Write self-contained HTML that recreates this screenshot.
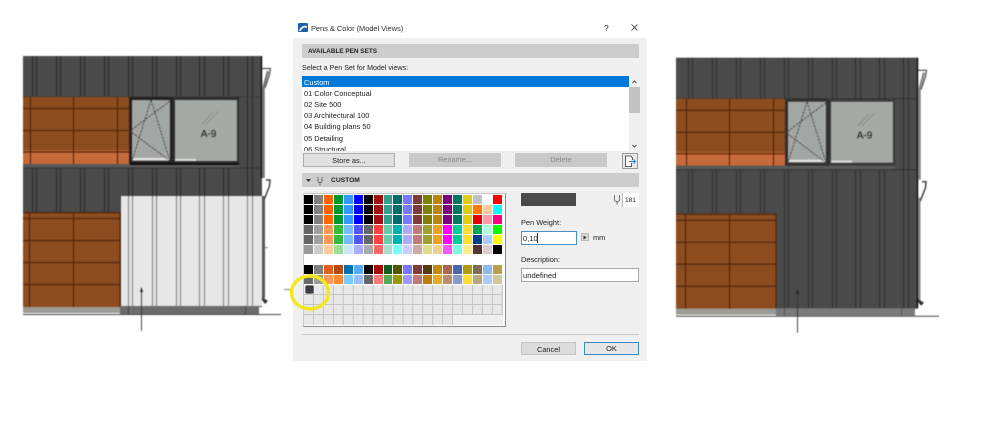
<!DOCTYPE html>
<html><head><meta charset="utf-8"><title>Pens &amp; Color</title>
<style>
html,body{margin:0;padding:0;background:#fff;width:998px;height:429px;overflow:hidden}
body{position:relative;font-family:"Liberation Sans",sans-serif;color:#222}
svg.d{position:absolute;left:0;top:0;filter:blur(.4px)}
.a{position:absolute}
.t{position:absolute;white-space:nowrap;font-size:7.4px;line-height:11px;color:#222}
.bar{position:absolute;left:302px;width:337px;height:14px;background:#cdcdcd;border-radius:1px}
.btn{position:absolute;height:13px;line-height:13px;text-align:center;font-size:7.4px;box-sizing:border-box}
.pal{position:absolute;left:304px;top:195px;width:199px;display:grid;grid-template-columns:repeat(20,8.95px);grid-auto-rows:9px;gap:1px}
.pal i{display:block}
</style></head><body>
<svg class="d" width="998" height="429" viewBox="0 0 998 429">
<!-- LEFT BUILDING -->
<rect x="23" y="56" width="239" height="112" fill="#4a4a4a"/>
<rect x="23" y="168" width="239" height="44" fill="#4a4a4a"/>
<rect x="120" y="196" width="142" height="111" fill="#4a4a4a"/>
<path transform="translate(.5 0)" d="M32 56V97M36 56V97M56 56V97M60 56V97M80 56V97M84 56V97M104 56V97M108 56V97M128 56V97M132 56V97M152 56V97M156 56V97M176 56V97M180 56V97M199 56V97M204 56V97M223 56V97M228 56V97M247 56V168M252 56V168M32 168V212M36 168V212M56 168V212M60 168V212M80 168V212M84 168V212M104 168V212M108 168V212M128 168V196M132 168V196M152 168V196M156 168V196M176 168V196M180 168V196M199 168V196M204 168V196M223 168V196M228 168V196M247 168V196M252 168V196" stroke="#2a2a2a" stroke-width="1" fill="none"/>
<path d="M23 97H262" stroke="#333" stroke-width=".8"/>
<rect x="23" y="97" width="106" height="54" fill="#8c4c1e"/>
<rect x="23" y="150" width="106" height="2" fill="#b0602e"/>
<rect x="23" y="152" width="106" height="12" fill="#c76a3a"/>
<path d="M23 108.500H129M23 130.500H129M23 152H129M30.500 97V164M73.500 97V164M117.500 97V164" stroke="#4a1e06" stroke-width="1" fill="none"/>
<rect x="129" y="97" width="44" height="68" fill="#222"/>
<rect x="132" y="100" width="38" height="61" fill="#a2a6a4"/>
<rect x="133" y="158" width="36" height="2" fill="#e8e8e8"/>
<path d="M151 100L132 161M151 100L170 161M170 101L130 131L170 161" stroke="#3c3c3c" stroke-width=".8" stroke-dasharray="2.500 1" fill="none"/>
<rect x="173" y="97" width="66" height="68" fill="#303030"/>
<rect x="175" y="100" width="62" height="61" fill="#a5a9a6"/>
<rect x="175" y="159" width="21" height="2" fill="#e4e4e4"/>
<path d="M202 124L213 112M206 124L219 111" stroke="#888" stroke-width=".8"/>
<text x="208.500" y="137" font-family="Liberation Sans,sans-serif" font-size="10" text-anchor="middle" fill="#111">A-9</text>
<rect x="23" y="164" width="216" height="4" fill="#5a5a5a"/>
<rect x="130" y="163" width="109" height="2" fill="#111"/>
<path d="M23 168H262" stroke="#2c2c2c" stroke-width=".8"/>
<path d="M261.500 56V178" stroke="#111" stroke-width="1.500"/>
<path d="M262 68.500H270.500L269.500 75L265 88" stroke="#333" stroke-width="1" fill="none"/>
<path d="M268 71L263.500 88V178" stroke="#777" stroke-width="2.500" fill="none"/>
<path d="M266 180H270L269.500 186L264 200" stroke="#444" stroke-width="1.500" fill="none"/>
<!-- lower left -->
<rect x="23" y="212" width="97" height="95" fill="#8c4c1e"/>
<path d="M23 212.500H120M23 218.500H120M23 240.500H120M23 262.500H120M23 284.500H120M29.500 212V307M73.500 212V307M120 212V307" stroke="#4a1e06" stroke-width="1" fill="none"/>
<rect x="121" y="196" width="141" height="110" fill="#e7e7e7"/>
<path transform="translate(.5 0)" d="M128 196V306M132 196V306M152 196V306M156 196V306M176 196V306M180 196V306M199 196V306M204 196V306M223 196V306M228 196V306M247 196V306M252 196V306" stroke="#858585" stroke-width="1.100" fill="none"/>
<rect x="23" y="307" width="97" height="6" fill="#9c9c96"/>
<rect x="120" y="306" width="139" height="8" fill="#6c6c6c"/>
<path d="M128.500 306V314M245.500 306V314" stroke="#444" stroke-width="1"/>
<path d="M23 314.500H281" stroke="#444" stroke-width="1"/>
<path d="M263.500 196V298" stroke="#5a5a5a" stroke-width="3" fill="none"/>
<path d="M262 297L268 301L265 304L262 300Z" fill="#333"/>
<path d="M141.500 291V331" stroke="#333" stroke-width=".9"/>
<path d="M141.500 287L143 292H140Z" fill="#222"/>
<path d="M262 247.500H268M284 289.500H291" stroke="#555" stroke-width=".8"/>

<!-- RIGHT BUILDING -->
<g transform="translate(656,1.700)">
<rect x="20" y="56" width="242" height="251" fill="#4a4a4a"/>
<path transform="translate(.5 0)" d="M32 56V97M36 56V97M56 56V97M60 56V97M80 56V97M84 56V97M104 56V97M108 56V97M128 56V97M132 56V97M152 56V97M156 56V97M176 56V97M180 56V97M199 56V97M204 56V97M223 56V97M228 56V97M247 56V306M252 56V306M32 168V212M36 168V212M56 168V212M60 168V212M80 168V212M84 168V212M104 168V212M108 168V212M128 168V306M132 168V306M152 168V306M156 168V306M176 168V306M180 168V306M199 168V306M204 168V306M223 168V306M228 168V306" stroke="#2e2e2e" stroke-width="1" fill="none"/>
<path d="M20 97H262" stroke="#333" stroke-width=".8"/>
<rect x="20" y="97" width="109" height="54" fill="#8c4c1e"/>
<rect x="20" y="150" width="109" height="2" fill="#b0602e"/>
<rect x="20" y="152" width="109" height="12" fill="#c76a3a"/>
<path d="M20 108.500H129M20 130.500H129M20 152H129M30.500 97V164M73.500 97V164M117.500 97V164" stroke="#4a1e06" stroke-width="1" fill="none"/>
<rect x="129" y="97" width="44" height="68" fill="#303030"/>
<rect x="132" y="100" width="38" height="61" fill="#a2a6a4"/>
<rect x="133" y="158" width="36" height="2" fill="#e8e8e8"/>
<path d="M151 100L132 161M151 100L170 161M170 101L130 131L170 161" stroke="#3c3c3c" stroke-width=".8" stroke-dasharray="2.500 1" fill="none"/>
<rect x="173" y="97" width="66" height="68" fill="#3a3a3a"/>
<rect x="175" y="100" width="62" height="61" fill="#a5a9a6"/>
<rect x="175" y="159" width="21" height="2" fill="#e4e4e4"/>
<path d="M202 124L213 112M206 124L219 111" stroke="#888" stroke-width=".8"/>
<text x="208.500" y="137" font-family="Liberation Sans,sans-serif" font-size="10" text-anchor="middle" fill="#111">A-9</text>
<rect x="20" y="164" width="219" height="4" fill="#5a5a5a"/>
<path d="M20 168H262" stroke="#2c2c2c" stroke-width=".8"/>
<path d="M261.500 56V306" stroke="#111" stroke-width="1.500"/>
<path d="M262 68.500H270.500L269.500 75L265 88" stroke="#333" stroke-width="1" fill="none"/>
<path d="M268 71L263.500 88V178" stroke="#888" stroke-width="2.500" fill="none"/>
<path d="M266 180H270L269.500 186L264 200" stroke="#444" stroke-width="1.500" fill="none"/>
<path d="M263.500 196V298" stroke="#8a8a8a" stroke-width="2" fill="none"/>
<rect x="20" y="212" width="100" height="95" fill="#8c4c1e"/>
<path d="M20 212.500H120M20 218.500H120M20 240.500H120M20 262.500H120M20 284.500H120M29.500 212V307M73.500 212V307M120 212V307" stroke="#4a1e06" stroke-width="1" fill="none"/>
<rect x="20" y="307" width="100" height="6" fill="#9c9c96"/>
<rect x="120" y="306.500" width="139" height="7.500" fill="#7a7a7a"/>
<path d="M128.500 306V314M245.500 306V314" stroke="#555" stroke-width="1"/>
<path d="M20 314.500H283" stroke="#444" stroke-width="1"/>
<path d="M262 297L268 301L265 304L262 300Z" fill="#333"/>
<path d="M141.500 291V331" stroke="#333" stroke-width=".9"/>
<path d="M141.500 287L143 292H140Z" fill="#222"/>
</g>
</svg>

<!-- DIALOG -->
<div class="a" style="left:293px;top:18px;width:354px;height:343px;background:#fff"></div>
<div class="a" style="left:293px;top:38px;width:354px;height:323px;background:#f0f0f0"></div>
<svg class="a" style="left:298px;top:23px" width="10" height="9" viewBox="0 0 10 9"><rect width="10" height="9" rx="1" fill="#1f5fa8"/><path d="M1 8C2 4 5 2 9 3L9 5C6 4 4 5 3 8Z" fill="#dfe8f4"/></svg>
<span class="t" style="left:311px;top:23px;font-size:7.400px;color:#333">Pens &amp; Color (Model Views)</span>
<span class="t" style="left:604px;top:23px;font-size:8.500px">?</span>
<svg class="a" style="left:631px;top:24px" width="7" height="7" viewBox="0 0 7 7"><path d="M.5 .5L6.500 6.500M6.500 .5L.5 6.500" stroke="#333" stroke-width=".8"/></svg>

<div class="bar" style="top:44px"></div>
<span class="t" style="left:308px;top:45.500px;font-weight:bold;font-size:6.400px;color:#222">AVAILABLE PEN SETS</span>
<span class="t" style="left:302px;top:63px;font-size:7.100px">Select a Pen Set for Model views:</span>

<div class="a" style="left:302px;top:76px;width:338px;height:75px;background:#fff;overflow:hidden">
  <div class="a" style="left:0;top:0;width:327px;height:11px;background:#0078d7"></div>
  <span class="t" style="left:2px;top:.5px;color:#fff">Custom</span>
  <span class="t" style="left:2px;top:11.700px">01 Color Conceptual</span>
  <span class="t" style="left:2px;top:22.800px">02 Site 500</span>
  <span class="t" style="left:2px;top:34px">03 Architectural 100</span>
  <span class="t" style="left:2px;top:45.200px">04 Building plans 50</span>
  <span class="t" style="left:2px;top:56.500px">05 Detailing</span>
  <span class="t" style="left:2px;top:67.800px">06 Structural</span>
  <div class="a" style="left:327px;top:0;width:11px;height:75px;background:#f0f0f0"></div>
  <div class="a" style="left:327px;top:11px;width:11px;height:26px;background:#c2c2c2"></div>
  <svg class="a" style="left:330px;top:4px" width="5" height="4" viewBox="0 0 5 4"><path d="M.5 3L2.500 1L4.500 3" stroke="#444" fill="none" stroke-width=".9"/></svg>
  <svg class="a" style="left:330px;top:68px" width="5" height="4" viewBox="0 0 5 4"><path d="M.5 1L2.500 3L4.500 1" stroke="#444" fill="none" stroke-width=".9"/></svg>
</div>

<div class="btn" style="left:303px;top:153px;width:92px;height:14px;line-height:13px;background:#e1e1e1;border:1px solid #adadad">Store as...</div>
<div class="btn" style="left:409px;top:153px;width:92px;height:14px;line-height:14px;background:#c9c9c9;color:#8a8a8a">Rename...</div>
<div class="btn" style="left:515px;top:153px;width:92px;height:14px;line-height:14px;background:#c9c9c9;color:#8a8a8a">Delete</div>
<div class="a" style="left:622px;top:153px;width:16px;height:16px;box-sizing:border-box;background:#e8e8e8;border:1px solid #9a9a9a"></div>
<svg class="a" style="left:624px;top:155px" width="13" height="13" viewBox="0 0 13 13"><path d="M7 1H1.500V11.500H7.500V8M7 1L8.500 3V5" stroke="#333" stroke-width=".8" fill="#fff"/><path d="M5 6.500H11.500M9.500 4.500L11.500 6.500L9.500 8.500" stroke="#2a7fc9" stroke-width=".9" fill="none"/></svg>

<div class="bar" style="top:173px"></div>
<svg class="a" style="left:306px;top:176px" width="20" height="10" viewBox="0 0 20 10"><path d="M0 3H5L2.500 6Z" fill="#333"/><path d="M12 1V5C12 7 16 7 16 5V1M14 6.500V9.500" stroke="#555" stroke-width=".8" fill="none"/></svg>
<span class="t" style="left:331px;top:175px;font-weight:bold;font-size:6.700px">CUSTOM</span>

<!-- palette -->
<div class="a" style="left:303px;top:193px;width:203px;height:134px;box-sizing:border-box;background:#fff;border-right:1.500px solid #8a8a8a;border-bottom:1.500px solid #8a8a8a;border-top:1px solid #c8c8c8;border-left:1px solid #c8c8c8"></div>
<div class="pal">
<i style="background:#000"></i><i style="background:#808080"></i><i style="background:#ff6600"></i><i style="background:#009933"></i><i style="background:#3399ff"></i><i style="background:#0000ff"></i><i style="background:#000"></i><i style="background:#a50f0f"></i><i style="background:#339f8e"></i><i style="background:#006e6e"></i><i style="background:#7878ff"></i><i style="background:#7f3a3a"></i><i style="background:#808000"></i><i style="background:#b8860b"></i><i style="background:#7f007f"></i><i style="background:#007a5e"></i><i style="background:#e0cc14"></i><i style="background:#c0c0c0"></i><i style="background:#fff"></i><i style="background:#ff0000"></i>
<i style="background:#000"></i><i style="background:#808080"></i><i style="background:#ff6600"></i><i style="background:#009933"></i><i style="background:#3399ff"></i><i style="background:#0000ff"></i><i style="background:#000"></i><i style="background:#a50f0f"></i><i style="background:#339f8e"></i><i style="background:#006e6e"></i><i style="background:#7878ff"></i><i style="background:#7f3a3a"></i><i style="background:#808000"></i><i style="background:#b8860b"></i><i style="background:#7f007f"></i><i style="background:#007a5e"></i><i style="background:#e0cc14"></i><i style="background:#ff7700"></i><i style="background:#ffcc99"></i><i style="background:#00ffff"></i>
<i style="background:#000"></i><i style="background:#808080"></i><i style="background:#ff6600"></i><i style="background:#009933"></i><i style="background:#3399ff"></i><i style="background:#0000ff"></i><i style="background:#000"></i><i style="background:#a50f0f"></i><i style="background:#339f8e"></i><i style="background:#006e6e"></i><i style="background:#7878ff"></i><i style="background:#7f3a3a"></i><i style="background:#808000"></i><i style="background:#b8860b"></i><i style="background:#7f007f"></i><i style="background:#007a5e"></i><i style="background:#e0cc14"></i><i style="background:#e60000"></i><i style="background:#ff99aa"></i><i style="background:#ff0080"></i>
<i style="background:#666"></i><i style="background:#a0a0a0"></i><i style="background:#ff9955"></i><i style="background:#33bb44"></i><i style="background:#77bbff"></i><i style="background:#5555ff"></i><i style="background:#666"></i><i style="background:#ff4040"></i><i style="background:#66ccb0"></i><i style="background:#00b3b3"></i><i style="background:#aaaaff"></i><i style="background:#c07a7a"></i><i style="background:#a0a030"></i><i style="background:#e6a520"></i><i style="background:#ff00ff"></i><i style="background:#00cc99"></i><i style="background:#ffdd33"></i><i style="background:#00aa55"></i><i style="background:#aaffdd"></i><i style="background:#00ff00"></i>
<i style="background:#666"></i><i style="background:#a0a0a0"></i><i style="background:#ff9955"></i><i style="background:#33bb44"></i><i style="background:#77bbff"></i><i style="background:#5555ff"></i><i style="background:#666"></i><i style="background:#ff4040"></i><i style="background:#66ccb0"></i><i style="background:#00b3b3"></i><i style="background:#aaaaff"></i><i style="background:#c07a7a"></i><i style="background:#a0a030"></i><i style="background:#e6a520"></i><i style="background:#ff00ff"></i><i style="background:#00cc99"></i><i style="background:#ffdd33"></i><i style="background:#003d8f"></i><i style="background:#aaccff"></i><i style="background:#ffff00"></i>
<i style="background:#999"></i><i style="background:#ccc"></i><i style="background:#ffcc99"></i><i style="background:#99dd99"></i><i style="background:#cce6ff"></i><i style="background:#aaaaff"></i><i style="background:#aaa"></i><i style="background:#ff6666"></i><i style="background:#aaddcc"></i><i style="background:#77ffff"></i><i style="background:#ccccff"></i><i style="background:#ccaaaa"></i><i style="background:#dddd88"></i><i style="background:#f0d090"></i><i style="background:#ff55ff"></i><i style="background:#77ffdd"></i><i style="background:#ffee88"></i><i style="background:#553333"></i><i style="background:#ddcccc"></i><i style="background:#000"></i>
<i style="background:#fff;grid-column:1/21"></i>
<i style="background:#000"></i><i style="background:#808080"></i><i style="background:#e06020"></i><i style="background:#b84a0a"></i><i style="background:#0070b0"></i><i style="background:#55aaff"></i><i style="background:#000"></i><i style="background:#a80808"></i><i style="background:#0f6020"></i><i style="background:#555500"></i><i style="background:#7878ff"></i><i style="background:#7f3a3a"></i><i style="background:#553a10"></i><i style="background:#c08a10"></i><i style="background:#aa6650"></i><i style="background:#4a66aa"></i><i style="background:#b09a10"></i><i style="background:#806a50"></i><i style="background:#88bbee"></i><i style="background:#b8a050"></i>
<i style="background:#6a6a6a"></i><i style="background:#999"></i><i style="background:#ff9955"></i><i style="background:#ff8833"></i><i style="background:#77ccff"></i><i style="background:#99bbff"></i><i style="background:#666"></i><i style="background:#ff7777"></i><i style="background:#55aa55"></i><i style="background:#999900"></i><i style="background:#9999ff"></i><i style="background:#c07777"></i><i style="background:#c07a10"></i><i style="background:#e6aa22"></i><i style="background:#c08a70"></i><i style="background:#8899cc"></i><i style="background:#ffdd33"></i><i style="background:#b8a880"></i><i style="background:#aaccff"></i><i style="background:#d0ca99"></i>
</div>
<div class="a" style="left:304px;top:285px;width:199px;height:30px;background-color:#e8e8e8;background-image:linear-gradient(90deg,transparent 8.950px,#c4c4c4 8.950px),linear-gradient(0deg,#c4c4c4 1px,transparent 1px);background-size:9.950px 10px"></div>
<div class="a" style="left:304px;top:315px;width:149px;height:10px;background-color:#e8e8e8;background-image:linear-gradient(90deg,transparent 8.950px,#c4c4c4 8.950px);background-size:9.950px 10px"></div>
<div class="a" style="left:453px;top:315px;width:50px;height:10px;background:#f0f0f0"></div>
<div class="a" style="left:306px;top:286px;width:7px;height:7px;background:#3c3c44;border-radius:1px;box-shadow:0 0 0 .5px #111"></div>
<svg class="a" style="left:285px;top:270px" width="50" height="46" viewBox="0 0 50 46"><ellipse cx="25" cy="22.500" rx="18.500" ry="16.500" fill="none" stroke="#f2e81a" stroke-width="3.400"/></svg>

<!-- right column -->
<div class="a" style="left:521px;top:193px;width:55px;height:13px;background:#4a4a4a"></div>
<svg class="a" style="left:613px;top:194px" width="8" height="11" viewBox="0 0 8 11"><path d="M1.500 1V6C1.500 8 6.500 8 6.500 6V1M4 7.500V10.500" stroke="#555" stroke-width=".8" fill="none"/></svg>
<div class="a" style="left:622px;top:193px;width:17px;height:14px;background:#fff;border-left:1px solid #bbb;box-sizing:border-box"></div>
<span class="t" style="left:625px;top:195px;font-size:6.500px">181</span>

<span class="t" style="left:521px;top:217px">Pen Weight:</span>
<div class="a" style="left:521px;top:231px;width:56px;height:14px;box-sizing:border-box;background:#fff;border:1px solid #4a90c8"></div>
<span class="t" style="left:523px;top:233px;font-size:7.600px">0,10</span>
<div class="a" style="left:537px;top:233px;width:1px;height:10px;background:#333"></div>
<div class="a" style="left:581px;top:233px;width:8px;height:8px;background:#d8d8d8;border:.5px solid #bbb;box-sizing:border-box"></div>
<svg class="a" style="left:583px;top:235px" width="4" height="5" viewBox="0 0 4 5"><path d="M.5 .5L3.500 2.500L.5 4.500Z" fill="#333"/></svg>
<span class="t" style="left:593px;top:232px">mm</span>

<span class="t" style="left:521px;top:254px">Description:</span>
<div class="a" style="left:521px;top:268px;width:118px;height:14px;box-sizing:border-box;background:#fff;border:1px solid #a8a8a8"></div>
<span class="t" style="left:523px;top:270px;font-size:7.600px">undefined</span>

<div class="a" style="left:302px;top:334px;width:337px;height:1px;background:#c8c8c8"></div>
<div class="btn" style="left:521px;top:342px;width:55px;line-height:13px;background:#dcdcdc;border:1px solid #c4c4c4">Cancel</div>
<div class="btn" style="left:584px;top:342px;width:55px;line-height:12px;background:#e6e6e6;border:1.300px solid #3c8ac4">OK</div>
</body></html>
